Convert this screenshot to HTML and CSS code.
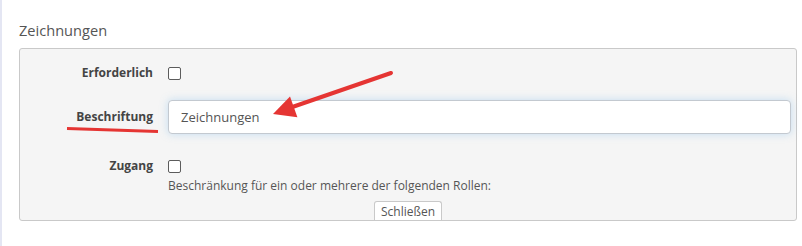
FILE: index.html
```html
<!DOCTYPE html>
<html lang="de">
<head>
    <meta charset="UTF-8">
    <title>Zeichnungen</title>
    <link rel="stylesheet" href="styles.css">
</head>
<body>
    <div class="page">
        <h2 class="section-title">Zeichnungen</h2>

        <div class="panel">
            <div class="field field-check">
                <label class="field-label" for="required">Erforderlich</label>
                <div class="field-control"><input type="checkbox" class="check" id="required"></div>
            </div>

            <div class="field field-text">
                <label class="field-label" for="caption">Beschriftung</label>
                <div class="field-control"><input type="text" class="text-input" id="caption" value="Zeichnungen"></div>
            </div>

            <div class="field field-check field-access">
                <label class="field-label" for="access">Zugang</label>
                <div class="field-control"><input type="checkbox" class="check" id="access"></div>
            </div>
            <div class="field">
                <span></span>
                <div class="help-text">Beschränkung für ein oder mehrere der folgenden Rollen:</div>
            </div>

            <div class="panel-footer">
                <button class="close-tab" type="button">Schließen</button>
            </div>
        </div>

        <!-- Markierungen aus dem Screenshot -->
        <svg class="markup" width="802" height="246" viewBox="0 0 802 246">
            <line x1="67" y1="128.5" x2="158" y2="131.5" stroke="#e53533" stroke-width="3" />
            <line x1="391" y1="73" x2="288" y2="108.5" stroke="#e53533" stroke-width="4" stroke-linecap="round" />
            <polygon points="273,114 290,96.4 297.4,117.2" fill="#e53533" />
        </svg>
    </div>
</body>
</html>
```

FILE: styles.css
```css
* {
    box-sizing: border-box;
}
body {
    margin: 0;
    background: #fff;
    font-family: "Open Sans", "Noto Sans", Arial, sans-serif;
    color: #555;
}
.page {
    position: relative;
    min-height: 246px;
    border-left: 2px solid #e4e6f3;
    padding: 20px 5px 0 17px;
}
.section-title {
    margin: 0 0 8px;
    font-size: 14.6px;
    font-weight: normal;
    line-height: 20px;
    color: #555;
}
.panel {
    background: #f5f5f5;
    border: 1px solid #c9c9c9;
    border-radius: 3px;
    padding: 15px 5px 0 0;
}
.field {
    display: grid;
    grid-template-columns: 133px 1fr;
    column-gap: 15px;
    align-items: center;
}
.field-label {
    text-align: right;
    font-size: 12px;
    font-weight: bold;
    color: #444;
    line-height: 18px;
}
.field-check {
    height: 18px;
}
.field-text {
    margin-top: 18px;
}
.field-access {
    margin-top: 23px;
}
.field-control {
    display: flex;
    align-items: center;
}
.check {
    appearance: none;
    -webkit-appearance: none;
    width: 13px;
    height: 13px;
    margin: 0;
    border: 1px solid #5c5c5c;
    border-radius: 2px;
    background: #fff;
}
.text-input {
    width: 100%;
    height: 34px;
    border: 1px solid #c3c9d0;
    border-radius: 4px;
    padding: 0 12px;
    font-family: inherit;
    font-size: 13px;
    color: #555;
    background: #fff;
    box-shadow: 0 0 8px rgba(102, 175, 233, 0.35);
    outline: none;
}
.help-text {
    font-size: 12px;
    line-height: 18px;
    margin-top: 2px;
    color: #555;
}
.panel-footer {
    display: flex;
    justify-content: center;
    margin-top: 6px;
    padding-left: 5px;
}
.close-tab {
    height: 19px;
    padding: 0 6px;
    border: 1px solid #c9c9c9;
    border-bottom: none;
    border-radius: 3px 3px 0 0;
    background: #fff;
    font-family: inherit;
    font-size: 12px;
    line-height: 17px;
    color: #555;
}
.markup {
    position: absolute;
    left: -2px;
    top: 0;
    pointer-events: none;
}
```
